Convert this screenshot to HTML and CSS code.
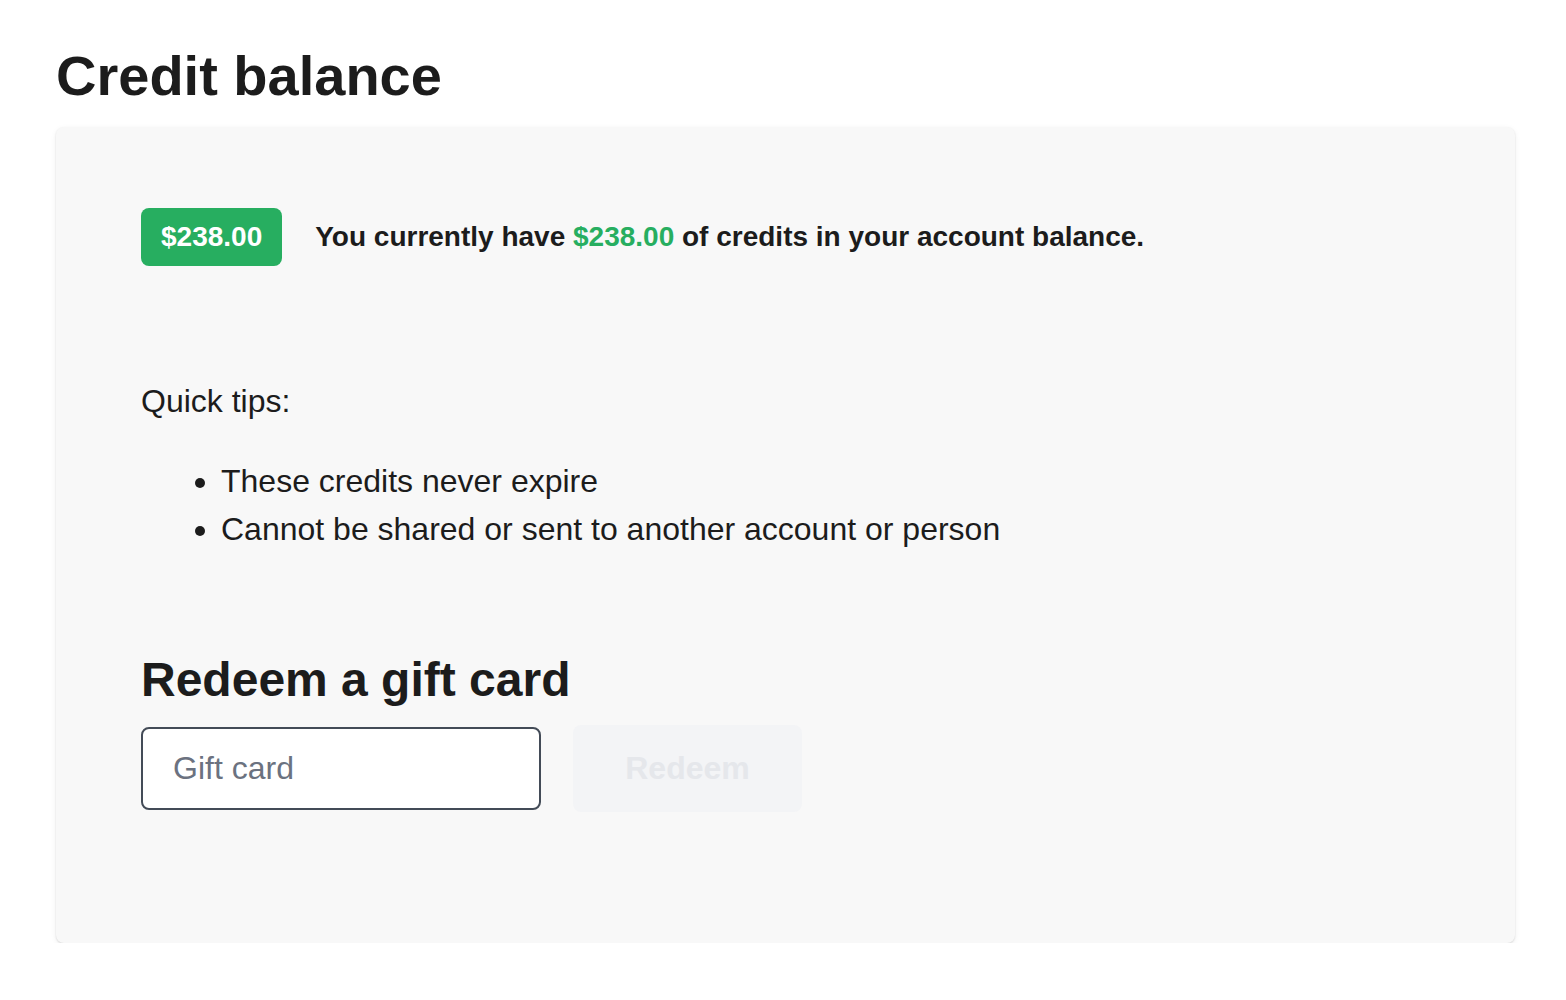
FILE: index.html
```html
<!DOCTYPE html>
<html lang="en">
<head>
<meta charset="utf-8">
<title>Credit balance</title>
<link rel="stylesheet" href="styles.css">
</head>
<body>
<main class="page">
  <h1 class="title">Credit balance</h1>
  <section class="card">
    <div class="balance-row">
      <span class="badge">$238.00</span>
      <p class="balance-text">You currently have <span class="green">$238.00</span> of credits in your account balance.</p>
    </div>
    <p class="tips-label">Quick tips:</p>
    <ul class="tips">
      <li>These credits never expire</li>
      <li>Cannot be shared or sent to another account or person</li>
    </ul>
    <h2 class="redeem-title">Redeem a gift card</h2>
    <form class="redeem-form">
      <input class="gift-input" type="text" placeholder="Gift card">
      <button class="redeem-btn" type="button" disabled>Redeem</button>
    </form>
  </section>
</main>
</body>
</html>
```

FILE: styles.css
```css
html, body {
  margin: 0;
  padding: 0;
  background: #ffffff;
}
body {
  font-family: "Liberation Sans", Arial, Helvetica, sans-serif;
  color: #1c1c1c;
}
.page {
  padding: 0 51px 0 56px;
}
.title {
  margin: 0;
  padding-top: 42px;
  font-size: 56px;
  line-height: 1.2;
  font-weight: 700;
  color: #1c1c1c;
}
.card {
  margin-top: 18px;
  background: #f8f8f8;
  border-radius: 8px;
  box-shadow: 0 1px 2px rgba(0, 0, 0, 0.12), 0 2px 6px rgba(0, 0, 0, 0.06);
  padding: 81px 80px 131px 85px;
}
.balance-row {
  display: flex;
  align-items: center;
  gap: 33px;
}
.badge {
  background: #27ae60;
  color: #ffffff;
  font-weight: 700;
  font-size: 28px;
  line-height: 42px;
  padding: 8px 20px;
  border-radius: 8px;
}
.balance-text {
  margin: 0;
  font-size: 28px;
  line-height: 42px;
  font-weight: 700;
  color: #1c1c1c;
}
.green {
  color: #27ae60;
}
.tips-label {
  margin: 111px 0 0;
  font-size: 32px;
  line-height: 48px;
}
.tips {
  margin: 32px 0 0;
  padding-left: 80px;
  font-size: 32px;
  line-height: 48px;
}
.redeem-title {
  margin: 98px 0 0;
  font-size: 48px;
  line-height: 1.2;
  font-weight: 700;
  color: #1c1c1c;
}
.redeem-form {
  margin-top: 16px;
  display: flex;
  align-items: center;
  gap: 32px;
}
.gift-input {
  box-sizing: border-box;
  width: 400px;
  height: 83px;
  border: 2px solid #434b57;
  border-radius: 8px;
  background: #ffffff;
  padding: 0 30px;
  font-family: "Liberation Sans", Arial, sans-serif;
  font-size: 32px;
  color: #1c1c1c;
  outline: none;
}
.gift-input::placeholder {
  color: #6b7280;
}
.redeem-btn {
  box-sizing: border-box;
  width: 229px;
  height: 87px;
  border: none;
  border-radius: 8px;
  background: #f3f4f6;
  color: #e5e7eb;
  font-family: "Liberation Sans", Arial, sans-serif;
  font-size: 32px;
  font-weight: 700;
  padding: 0;
}
```
